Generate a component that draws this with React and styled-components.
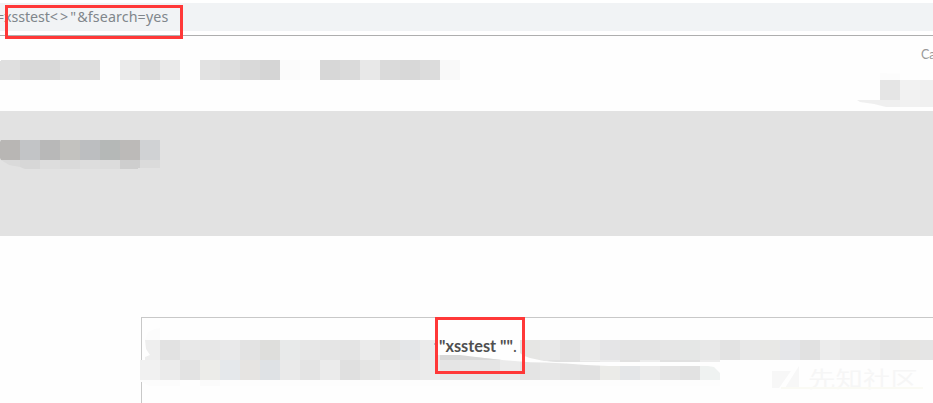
import React from "react";
import styled, { createGlobalStyle } from "styled-components";

const GlobalStyle = createGlobalStyle`
  * { box-sizing: border-box; }
  body { margin: 0; background: #fefefe; overflow: hidden; }
`;

const Page = styled.main`
  position: relative;
  width: 933px;
  height: 403px;
  overflow: hidden;
  display: flex;
  flex-direction: column;
  background: #fefefe;
`;

const AddressBar = styled.div`
  height: 36px;
  flex: none;
  padding-top: 3px;
  background: #fff;
  border-bottom: 1px solid #aeaeae;
`;

const AddressField = styled.div`
  height: 28px;
  background: #f1f3f5;
  color: #80868b;
  font: 15px/26px "Noto Sans", sans-serif;
  white-space: pre;
`;

const Url = styled.span`
  display: inline-block;
  margin-left: -4px;
  transform: scaleX(${(p) => p.$stretch});
  transform-origin: left;
`;

const Spaced = styled.span`
  letter-spacing: ${(p) => p.$gap}px;
`;

const Header = styled.header`
  height: 75px;
  flex: none;
  display: flex;
  justify-content: space-between;
`;

const Nav = styled.nav`
  padding-top: 24px;
`;

const Account = styled.div`
  width: 76px;
  padding-top: 10px;
  display: flex;
  flex-direction: column;
`;

const AccountLabel = styled.span`
  height: 27px;
  padding-left: 64px;
  color: #999;
  font: 12.5px/17px Lato, sans-serif;
`;

const Mosaic = styled.div`
  display: flex;
  height: ${(p) => p.$height || 20}px;
  margin-left: ${(p) => p.$left || 0}px;
  clip-path: ${(p) => p.$clip || "none"};
`;

const Tile = styled.span`
  flex: none;
  width: ${(p) => p.$width}px;
  background: ${(p) => p.$tone};
`;

const Banner = styled.section`
  height: 125px;
  flex: none;
  padding-top: 29px;
  background: #e2e2e2;
`;

const Results = styled.section`
  position: relative;
  height: 90px;
  margin: 81px 0 0 141px;
  padding-top: 10px;
  border-top: 1px solid #c8c8c8;
  border-left: 1px solid #c8c8c8;
`;

const Brush = styled.svg`
  position: absolute;
  left: 0;
  top: 0;
`;

const Query = styled.p`
  position: absolute;
  left: 297px;
  top: 17px;
  margin: 0;
  color: #505050;
  font: 16.3px/22px Lato, sans-serif;
  white-space: pre;
`;

const Highlight = styled.div`
  position: absolute;
  left: ${(p) => p.$x}px;
  top: ${(p) => p.$y}px;
  width: ${(p) => p.$w}px;
  height: ${(p) => p.$h}px;
  border: 3px solid #ff3838;
`;

const Watermark = styled.div`
  position: absolute;
  left: 771px;
  top: 366px;
  display: flex;
  gap: 9px;
  color: #f6f6f6;
  font: 27.5px/28px "Noto Sans CJK SC", sans-serif;
  white-space: nowrap;
`;

const WatermarkName = styled.span`
  transform: scaleY(0.8);
  transform-origin: top;
`;

const Underline = styled.div`
  position: absolute;
  left: 10px;
  top: 21px;
  width: 142px;
  height: 2px;
  background: #fafaf4;
`;

const navTones = ["#dfdfdf", "#d9d9d9", "#d9d9d9", "#dfdfdf", "#dedede", "transparent", "#ebebeb", "#dedede", "#eaeaea", "transparent", "#e2e2e2", "#dedede", "#d9d9d9", "#d5d5d5", "#fbfbfb", "#fdfdfd", "#d7d7d7", "#dadada", "#e8e8e8", "#dadada", "#d8d8d8", "#dcdcdc", "#f9f9f9"];
const titleTones = ["#b8b6b4", "#c2c4c6", "#b8b8b8", "#c3c2bf", "#bcbec0", "#b5b8b7", "#bcbab8", "#d0d2d4"];
const titleShade = ["#dadada", "#d7d7d7", "#dddddd", "#dadada", "#dddddd", "#dcdcdc", "#cecece", "#dbdbdb"];
const firstLine = ["#eeeeee", "#e2e2e2", "#e8e8e8", "#e7e7e7", "#e9e9ea", "#e3e3e3", "#dededc", "#e8eaea", "#e7e7e7", "#e5e5e5", "#e4e4e4", "#ebebeb", "#e3e3e2", "#e4e6e8", "#ebebeb", "#e5e5e5", "#e5e5e5", "#e5e5e5", "#e6e6e6", "#e6e6e4", "#e8e8e8", "#e3e3e3", "#eaeaea", "#e5e5e7", "#e4e4e4", "#e4e4e4", "#e6e6e6", "#e5e7e6", "#e8e8e8", "#e3e3e3", "#e8e8e8", "#e8e8e6", "#e5e6e9", "#e1e1e1", "#ececec", "#e8e8e8", "#e7e7e7", "#e3e3e3", "#e5e4e2", "#e5e5e5"];
const secondLine = ["#f1f1f1", "#ebebeb", "#e3e3e3", "#ecece9", "#e5e8eb", "#e6e4e2", "#dfe2e5", "#eaeaea", "#e4e4e4", "#ebebeb", "#e0e0e0", "#e5e5e4", "#ebebeb", "#e9e9e9", "#ebebeb", "#e5e5e5", "#e7e7e7", "#e5e5e5", "#ebebeb", "#e4e4e4", "#e7e7e7", "#e4e4e4", "#e1e1e1", "#ebebe8", "#e4e6e8", "#ebebeb", "#e5e5e5", "#e2e2e2", "#eff2f1"];
const residue = ["#fcfcfc", "#fcfcfc", "#fefefe", "#fbfbfb", ...Array(25).fill("#fdfdfd")];

function Tiles({ tones, first = 20, ...rest }) {
  return (
    <Mosaic {...rest}>
      {tones.map((tone, i) => (
        <Tile key={i} $width={i ? 20 : first} $tone={tone} />
      ))}
    </Mosaic>
  );
}

export default function App() {
  return (
    <Page>
      <GlobalStyle />
      <AddressBar>
        <AddressField>
          <Url $stretch={0.95}>
            <Spaced $gap={-0.1}>=xsstest</Spaced>
            <Spaced $gap={2.2}>{"<>"}</Spaced>
            <Spaced $gap={1.3}>{'"'}</Spaced>
            <Spaced $gap={0.12}>&amp;fsearch=yes</Spaced>
          </Url>
        </AddressField>
      </AddressBar>
      <Header>
        <Nav>
          <Tiles tones={navTones} $clip="polygon(1px 0, 100% 0, 100% 100%, 0 100%, 0 1px, 1px 1px)" />
        </Nav>
        <Account>
          <AccountLabel>Ca</AccountLabel>
          <Tiles tones={["#fcfcfc", "#fefefe"]} $height={7} $left={23} $clip="polygon(0 0, 100% 30%, 100% 100%, 0 100%)" />
          <Tiles tones={["#e5e5e5", "#f2f2f2", "#f0f0f0"]} $left={23} />
          <Tiles tones={["#efefef", "#efefef", "#f1f1f1", "#f0f0f0"]} first={23} $height={7} $clip="polygon(0 0, 100% 0, 100% 100%, 29px 100%, 17px 4px, 3px 2px)" />
        </Account>
      </Header>
      <Banner>
        <Tiles tones={titleTones} $clip="polygon(1px 0, 100% 0, 100% 100%, 1px 100%, 0 18px, 0 2px)" />
        <Tiles tones={titleShade} $height={9} $clip="polygon(1px 0, 160px 0, 160px 8px, 138px 8px, 138px 9px, 25px 9px, 20px 7px, 9px 5px)" />
      </Banner>
      <Results>
        <Tiles tones={["#fcfcfc"]} first={15} $left={3} $height={12} $clip="polygon(0 12px, 3px 4px, 10px 1px, 15px 0, 15px 12px)" />
        <Tiles tones={firstLine} first={15} $left={3} $clip="polygon(0 0, 100% 0, 100% 100%, 0 100%, 0 17px, 5px 15px, 1px 9px)" />
        <Tiles tones={secondLine} $left={-2} />
        <Tiles tones={residue} $left={-2} $height={6} $clip="polygon(0 0, 100% 0, 100% 100%, 9px 100%, 2px 2px, 0 2px)" />
        <Brush width="791" height="85" viewBox="142 318 791 85">
          <path d="M435 339V355H439L480 357.5L502 360L530 362.3L545 362.5L566 363.5L586 365L609 366H708L714 367L720 373V362H566L544 361L530 358L523 355.5L520 353V339Z" fill="#fefefe" />
          <path d="M440 355H460L480 357.5L502 360H440Z" fill="#d8d8d8" />
          <path d="M550 360H580V360.2H600V362H556L547 361ZM620 360H640V362H620ZM660 360H700V362H660Z" fill="#e1e1e1" />
          <path d="M580 360H620V362H600V361.5H580ZM640 360H660V362H640ZM700 360H720V362H700Z" fill="#ededed" />
          <path d="M434 344H435" stroke="#8297aa" />
        </Brush>
        <Query>
          <b>{'"xsstest ""'}</b>.
        </Query>
      </Results>
      <Watermark>
        <svg width="28" height="23" viewBox="0 0 28 23">
          <path d="M1 5H20L8 22H1ZM28 0V22H14Z" fill="#f7f7f7" />
        </svg>
        <WatermarkName>先知社区</WatermarkName>
        <Underline />
      </Watermark>
      <Highlight $x={5} $y={5} $w={178} $h={34} />
      <Highlight $x={435} $y={317} $w={90} $h={57} />
    </Page>
  );
}
